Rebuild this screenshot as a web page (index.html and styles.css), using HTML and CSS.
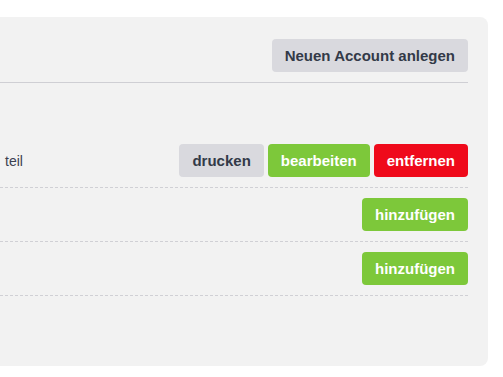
FILE: index.html
```html
<!DOCTYPE html>
<html lang="de">
<head>
  <meta charset="UTF-8">
  <meta name="viewport" content="width=device-width, initial-scale=1.0">
  <title>Accounts</title>
  <link rel="stylesheet" href="styles.css">
</head>
<body>
  <section class="panel">
    <div class="panel-head">
      <button class="btn btn-grey">Neuen Account anlegen</button>
    </div>

    <div class="list">
      <div class="row">
        <span class="name">teil</span>
        <div class="actions">
          <button class="btn btn-grey">drucken</button>
          <button class="btn btn-green">bearbeiten</button>
          <button class="btn btn-red">entfernen</button>
        </div>
      </div>
      <div class="row">
        <span class="name"></span>
        <div class="actions">
          <button class="btn btn-green">hinzufügen</button>
        </div>
      </div>
      <div class="row">
        <span class="name"></span>
        <div class="actions">
          <button class="btn btn-green">hinzufügen</button>
        </div>
      </div>
    </div>
  </section>
</body>
</html>
```

FILE: styles.css
```css
body {
  margin: 0;
  background: #fff;
  font-family: "Liberation Sans", Arial, sans-serif;
  overflow: hidden;
}

.panel {
  margin: 17px 15px 0 -60px;
  height: 349px;
  box-sizing: border-box;
  padding: 22px 20px 0 60px;
  background: #f2f2f2;
  border-radius: 8px;
}

.panel-head {
  display: flex;
  justify-content: flex-end;
  padding-bottom: 10px;
  border-bottom: 1px solid #cfcfd4;
}

.list {
  padding-top: 51px;
}

.row {
  display: flex;
  align-items: center;
  justify-content: space-between;
  padding: 10px 0;
  border-bottom: 1px dashed #d0d0d5;
}

.name {
  margin-left: 5px;
  font-size: 14px;
  color: #3c4150;
}

.actions {
  display: flex;
  gap: 4px;
}

.btn {
  height: 33px;
  padding: 0 13px;
  border: 0;
  border-radius: 4px;
  font-family: "Liberation Sans", Arial, sans-serif;
  font-size: 15px;
  font-weight: bold;
  cursor: pointer;
}

.btn-grey {
  background: #d9d9de;
  color: #333a48;
}

.btn-green {
  background: #7dc83a;
  color: #fff;
}

.btn-red {
  background: #ef0a1b;
  color: #fff;
}
```
